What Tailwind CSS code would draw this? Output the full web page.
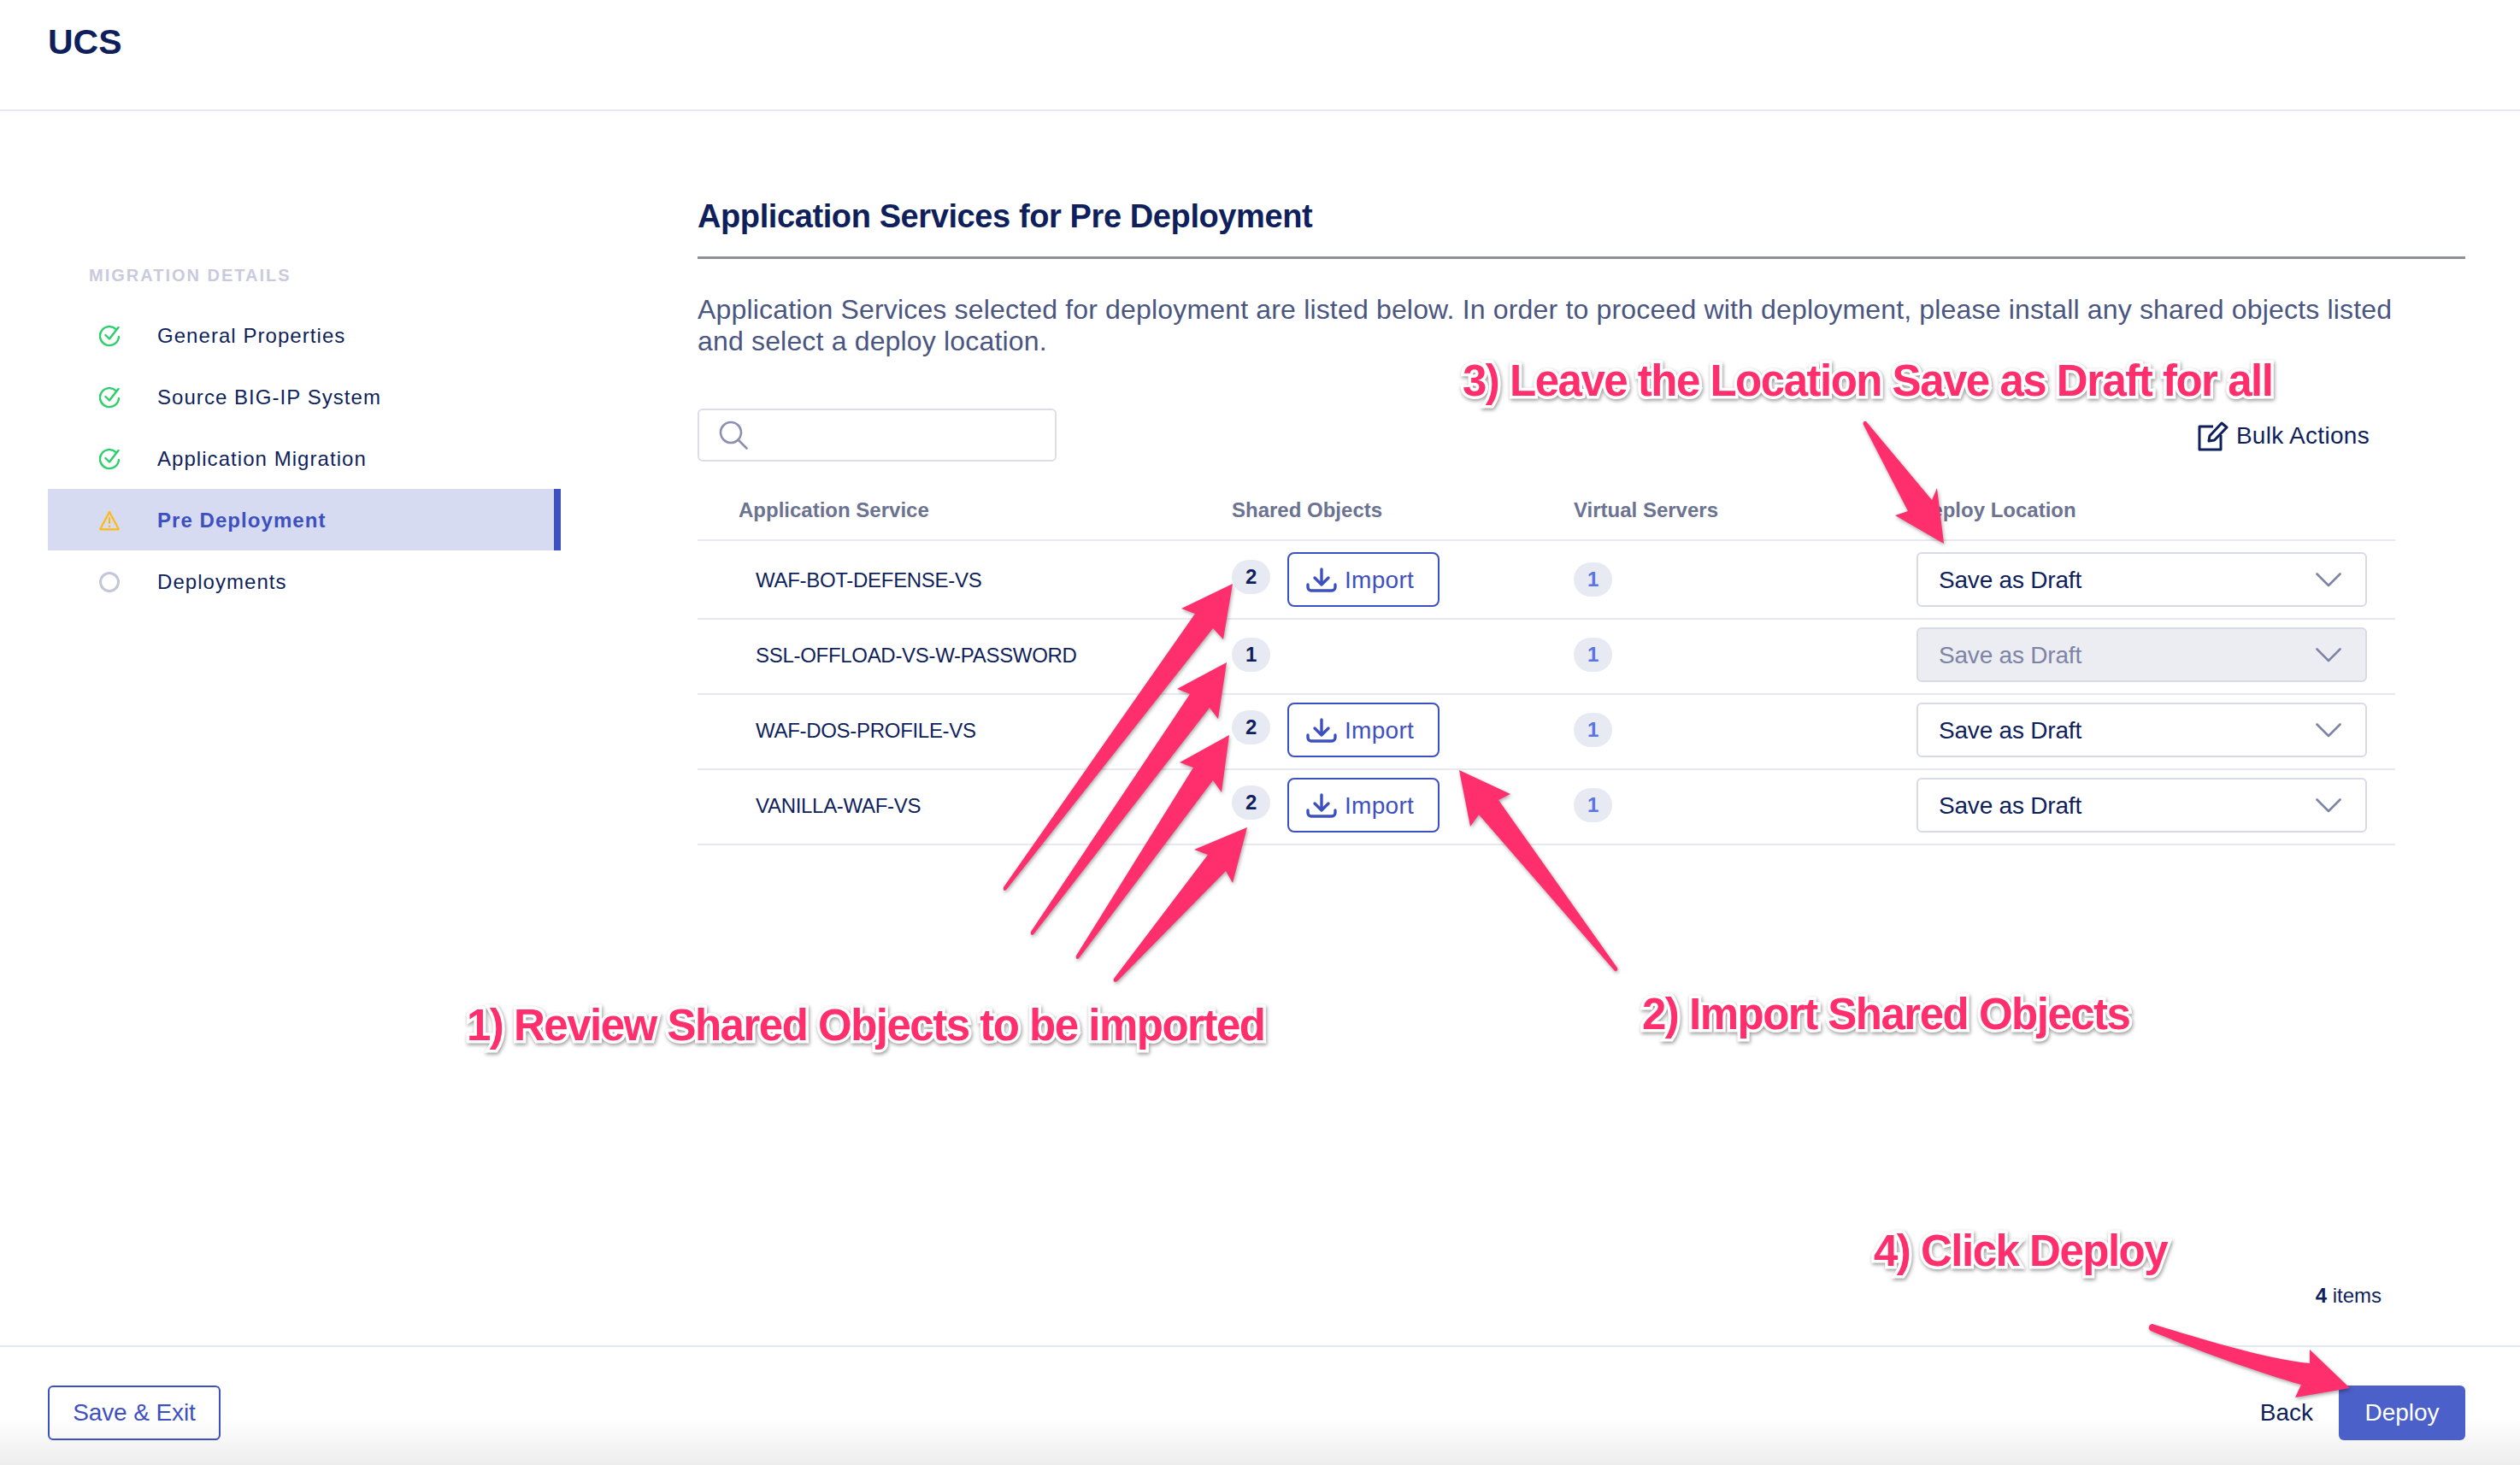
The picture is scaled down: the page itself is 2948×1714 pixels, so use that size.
<!DOCTYPE html>
<html lang="en">
<head>
    <meta charset="UTF-8">
    <meta name="viewport" content="width=device-width, initial-scale=1.0">
    <title>UCS Pre Deployment</title>
    <script src="https://cdn.jsdelivr.net/npm/@tailwindcss/browser@4"></script>
</head>
<body class="relative bg-white h-[1714px] overflow-hidden flex flex-col font-['Liberation_Sans',Arial,sans-serif] text-[#0f1f5c]">

    <!-- Header -->
    <header class="h-[130px] shrink-0 border-b-2 border-[#e8e9f0] pl-[56px] pt-[25px]">
        <h1 class="text-[41px] leading-[48px] font-bold">UCS</h1>
    </header>

    <div class="flex-1 flex min-h-0">
        <!-- Sidebar -->
        <aside class="w-[600px] ml-[56px] shrink-0 pt-[180px]">
            <div class="pl-[48px] text-[20px] leading-[24px] font-bold tracking-[2px] text-[#c8cbdd]">MIGRATION DETAILS</div>
            <ul class="mt-[22px]">
                <li class="h-[72px] flex items-center pl-[60px] pt-[2px] text-[24px] tracking-[1.05px]">
                    <svg class="w-[24px] h-[26px] mr-[44px]" viewBox="0 0 24 26" fill="none" stroke="#2bcf6c" stroke-width="2.4" stroke-linecap="round" stroke-linejoin="round"><path d="M20 5.5A11 11 0 1 0 23 14"/><path d="M7.5 12l4.5 4.5L22.5 3"/></svg>
                    <span>General Properties</span>
                </li>
                <li class="h-[72px] flex items-center pl-[60px] pt-[2px] text-[24px] tracking-[1.05px]">
                    <svg class="w-[24px] h-[26px] mr-[44px]" viewBox="0 0 24 26" fill="none" stroke="#2bcf6c" stroke-width="2.4" stroke-linecap="round" stroke-linejoin="round"><path d="M20 5.5A11 11 0 1 0 23 14"/><path d="M7.5 12l4.5 4.5L22.5 3"/></svg>
                    <span>Source BIG-IP System</span>
                </li>
                <li class="h-[72px] flex items-center pl-[60px] pt-[2px] text-[24px] tracking-[1.05px]">
                    <svg class="w-[24px] h-[26px] mr-[44px]" viewBox="0 0 24 26" fill="none" stroke="#2bcf6c" stroke-width="2.4" stroke-linecap="round" stroke-linejoin="round"><path d="M20 5.5A11 11 0 1 0 23 14"/><path d="M7.5 12l4.5 4.5L22.5 3"/></svg>
                    <span>Application Migration</span>
                </li>
                <li class="h-[72px] flex items-center pl-[60px] pt-[2px] text-[24px] tracking-[1.05px] font-bold text-[#3d50bf] bg-[#d7dbf1] border-r-[8px] border-[#3d50bf]">
                    <svg class="w-[24px] h-[24px] mr-[44px]" viewBox="0 0 24 24" fill="none" stroke="#fdb913" stroke-width="2.2" stroke-linecap="round" stroke-linejoin="round"><path d="M12 2L1.5 21.5a.6.6 0 0 0 .5.9h20a.6.6 0 0 0 .5-.9z"/><path d="M12 9v6"/><path d="M12 18.5v.4"/></svg>
                    <span>Pre Deployment</span>
                </li>
                <li class="h-[72px] flex items-center pl-[60px] pt-[2px] text-[24px] tracking-[1.05px]">
                    <span class="w-[24px] h-[24px] mr-[44px] rounded-full border-[3px] border-[#c3c7da]"></span>
                    <span>Deployments</span>
                </li>
            </ul>
        </aside>

        <!-- Main content -->
        <main class="ml-[160px] w-[2068px] flex flex-col pt-[99px]">
            <h2 class="text-[38px] leading-[48px] font-bold tracking-[-0.4px] pb-[23px] border-b-[3px] border-[#8f9096]">Application Services for Pre Deployment</h2>
            <p class="mt-[41px] text-[32px] leading-[37px] tracking-[0.17px] text-[#4a5680]">Application Services selected for deployment are listed below. In order to proceed with deployment, please install any shared objects listed<br>and select a deploy location.</p>

            <div class="w-[1986px]">
                <!-- Search and bulk actions -->
                <div class="mt-[60px] flex items-center justify-between pr-[30px]">
                    <div class="w-[420px] h-[62px] rounded-[6px] border-2 border-[#dcdde8] flex items-center pl-[23px]">
                        <svg class="w-[34px] h-[34px]" viewBox="0 0 34 34" fill="none" stroke="#8a90ad" stroke-width="2.6" stroke-linecap="round"><circle cx="14" cy="14" r="12"/><path d="M23 23l9.5 9.5"/></svg>
                    </div>
                    <div class="flex items-center text-[28px] tracking-[0.3px] gap-[9px] pt-[2px]">
                        <svg class="w-[36px] h-[36px]" viewBox="0 0 36 36" fill="none" stroke="#0f1f5c" stroke-width="3" stroke-linejoin="round"><path d="M18 7H2v27h25V17"/><path d="M13 24l1-6L28 3l6 5-14.500 15z"/></svg>
                        <span>Bulk Actions</span>
                    </div>
                </div>

                <!-- Table -->
                <div class="grid grid-cols-[625px_400px_401px_560px] h-[93px] items-end pb-[20px] border-b-2 border-[#e8e9f0] text-[24px] leading-[28px] font-bold text-[#6b7390]">
                    <div class="pl-[48px]">Application Service</div>
                    <div>Shared Objects</div>
                    <div>Virtual Servers</div>
                    <div>Deploy Location</div>
                </div>

                <div class="grid grid-cols-[625px_400px_401px_560px] items-center h-[92px] border-b-2 border-[#e8e9f0] text-[24px] tracking-[-0.3px]">
                    <div class="pl-[68px] pt-[2px]">WAF-BOT-DEFENSE-VS</div>
                    <div class="flex items-center gap-[20px]">
                        <span class="w-[45px] h-[40px] mb-[7px] rounded-full bg-[#e8eaf3] flex items-center justify-center font-bold text-[24px]">2</span>
                        <button class="w-[178px] h-[64px] rounded-[8px] border-2 border-[#3d50bf] text-[#3d50bf] text-[28px] tracking-[0.3px] flex items-center pl-[20px] pt-[2px] gap-[9px]">
                            <svg class="w-[36px] h-[30px]" viewBox="0 0 36 30" fill="none" stroke="#3d50bf" stroke-width="3.400" stroke-linecap="round" stroke-linejoin="round"><path d="M18 2v17M10 12l8 8 8-8"/><path d="M2 20v3a4 4 0 0 0 4 4h24a4 4 0 0 0 4-4v-3"/></svg>
                            Import
                        </button>
                    </div>
                    <div><span class="w-[45px] h-[40px] rounded-full bg-[#e8eaf3] flex items-center justify-center text-[24px] font-bold text-[#5b74e4]">1</span></div>
                    <div class="w-[527px] h-[64px] rounded-[6px] border-2 border-[#d8dae6] flex items-center justify-between pl-[24px] pr-[28px] text-[28px] tracking-[-0.2px]">
                        <span class="pt-[2px]">Save as Draft</span>
                        <svg class="w-[30px] h-[17px]" viewBox="0 0 30 17" fill="none" stroke="#7d84a6" stroke-width="2.6" stroke-linecap="round" stroke-linejoin="round"><path d="M1.500 1.500L15 15 28.500 1.500"/></svg>
                    </div>
                </div>

                <div class="grid grid-cols-[625px_400px_401px_560px] items-center h-[88px] pb-[4px] border-b-2 border-[#e8e9f0] text-[24px] tracking-[-0.3px]">
                    <div class="pl-[68px] pt-[2px]">SSL-OFFLOAD-VS-W-PASSWORD</div>
                    <div class="flex items-center">
                        <span class="w-[45px] h-[40px] rounded-full bg-[#e8eaf3] flex items-center justify-center font-bold text-[24px]">1</span>
                    </div>
                    <div><span class="w-[45px] h-[40px] rounded-full bg-[#e8eaf3] flex items-center justify-center text-[24px] font-bold text-[#5b74e4]">1</span></div>
                    <div class="w-[527px] h-[64px] rounded-[6px] border-2 border-[#d8dae6] bg-[#ecedf2] text-[#7d84a6] flex items-center justify-between pl-[24px] pr-[28px] text-[28px] tracking-[-0.2px]">
                        <span class="pt-[2px]">Save as Draft</span>
                        <svg class="w-[30px] h-[17px]" viewBox="0 0 30 17" fill="none" stroke="#7d84a6" stroke-width="2.6" stroke-linecap="round" stroke-linejoin="round"><path d="M1.500 1.500L15 15 28.500 1.500"/></svg>
                    </div>
                </div>

                <div class="grid grid-cols-[625px_400px_401px_560px] items-center h-[88px] pb-[4px] border-b-2 border-[#e8e9f0] text-[24px] tracking-[-0.3px]">
                    <div class="pl-[68px] pt-[2px]">WAF-DOS-PROFILE-VS</div>
                    <div class="flex items-center gap-[20px]">
                        <span class="w-[45px] h-[40px] mb-[6px] rounded-full bg-[#e8eaf3] flex items-center justify-center font-bold text-[24px]">2</span>
                        <button class="w-[178px] h-[64px] rounded-[8px] border-2 border-[#3d50bf] text-[#3d50bf] text-[28px] tracking-[0.3px] flex items-center pl-[20px] pt-[2px] gap-[9px]">
                            <svg class="w-[36px] h-[30px]" viewBox="0 0 36 30" fill="none" stroke="#3d50bf" stroke-width="3.400" stroke-linecap="round" stroke-linejoin="round"><path d="M18 2v17M10 12l8 8 8-8"/><path d="M2 20v3a4 4 0 0 0 4 4h24a4 4 0 0 0 4-4v-3"/></svg>
                            Import
                        </button>
                    </div>
                    <div><span class="w-[45px] h-[40px] rounded-full bg-[#e8eaf3] flex items-center justify-center text-[24px] font-bold text-[#5b74e4]">1</span></div>
                    <div class="w-[527px] h-[64px] rounded-[6px] border-2 border-[#d8dae6] flex items-center justify-between pl-[24px] pr-[28px] text-[28px] tracking-[-0.2px]">
                        <span class="pt-[2px]">Save as Draft</span>
                        <svg class="w-[30px] h-[17px]" viewBox="0 0 30 17" fill="none" stroke="#7d84a6" stroke-width="2.6" stroke-linecap="round" stroke-linejoin="round"><path d="M1.500 1.500L15 15 28.500 1.500"/></svg>
                    </div>
                </div>

                <div class="grid grid-cols-[625px_400px_401px_560px] items-center h-[88px] pb-[4px] border-b-2 border-[#e8e9f0] text-[24px] tracking-[-0.3px]">
                    <div class="pl-[68px] pt-[2px]">VANILLA-WAF-VS</div>
                    <div class="flex items-center gap-[20px]">
                        <span class="w-[45px] h-[40px] mb-[6px] rounded-full bg-[#e8eaf3] flex items-center justify-center font-bold text-[24px]">2</span>
                        <button class="w-[178px] h-[64px] rounded-[8px] border-2 border-[#3d50bf] text-[#3d50bf] text-[28px] tracking-[0.3px] flex items-center pl-[20px] pt-[2px] gap-[9px]">
                            <svg class="w-[36px] h-[30px]" viewBox="0 0 36 30" fill="none" stroke="#3d50bf" stroke-width="3.400" stroke-linecap="round" stroke-linejoin="round"><path d="M18 2v17M10 12l8 8 8-8"/><path d="M2 20v3a4 4 0 0 0 4 4h24a4 4 0 0 0 4-4v-3"/></svg>
                            Import
                        </button>
                    </div>
                    <div><span class="w-[45px] h-[40px] rounded-full bg-[#e8eaf3] flex items-center justify-center text-[24px] font-bold text-[#5b74e4]">1</span></div>
                    <div class="w-[527px] h-[64px] rounded-[6px] border-2 border-[#d8dae6] flex items-center justify-between pl-[24px] pr-[28px] text-[28px] tracking-[-0.2px]">
                        <span class="pt-[2px]">Save as Draft</span>
                        <svg class="w-[30px] h-[17px]" viewBox="0 0 30 17" fill="none" stroke="#7d84a6" stroke-width="2.6" stroke-linecap="round" stroke-linejoin="round"><path d="M1.500 1.500L15 15 28.500 1.500"/></svg>
                    </div>
                </div>
            </div>

            <div class="mt-auto self-end mr-[98px] mb-[46px] text-[24px] leading-[24px]"><span class="font-bold">4</span> items</div>
        </main>
    </div>

    <!-- Footer -->
    <footer class="h-[140px] shrink-0 border-t-2 border-[#e4e8f2] bg-[linear-gradient(to_bottom,#fff_60%,#ededed)] pl-[56px] pr-[64px] pt-[16px] flex items-center justify-between">
        <button class="w-[202px] h-[64px] rounded-[6px] border-2 border-[#3d50bf] text-[#3d50bf] text-[28px] tracking-[-0.1px]">Save &amp; Exit</button>
        <div class="flex items-center gap-[30px] text-[28px]">
            <button>Back</button>
            <button class="w-[148px] h-[64px] rounded-[6px] bg-[#4b60c8] text-white">Deploy</button>
        </div>
    </footer>

    <!-- Tutorial arrows drawn over the screenshot -->
    <svg class="absolute inset-0 w-[2948px] h-[1714px] pointer-events-none drop-shadow-[1px_2px_2px_rgba(0,0,0,0.35)]" viewBox="0 0 2948 1714" fill="#ff2e6c">
        <path d="M1442 683L1382 712 1398 718 1174 1038Q1173 1041 1175 1042 1177 1042 1178 1040L1419 735 1431 748z"/>
        <path d="M1435 775L1377 806 1392 812 1206 1090Q1205 1093 1207 1094 1209 1094 1210 1092L1415 828 1425 841z"/>
        <path d="M1438 860L1380 892 1396 898 1259 1118Q1258 1121 1260 1122 1262 1122 1263 1120L1419 913 1429 927z"/>
        <path d="M1459 968L1397 994 1413 1000 1303 1145Q1302 1148 1304 1149 1306 1149 1308 1147L1434 1019 1442 1033z"/>
        <path d="M1707 901L1720 967 1730 953 1889 1136Q1891 1137 1892 1135 1893 1133 1891 1131L1753 936 1767 929z"/>
        <path d="M2274 636L2266 571 2260 585 2183 493Q2181 492 2180 494 2179 496 2180 497L2232 598 2217 603z"/>
        <path d="M2749 1624L2702 1579 2702 1595C2650 1590 2570 1565 2518 1549 2514 1549 2512 1555 2516 1557 2570 1580 2640 1605 2692 1620L2685 1635z"/>
    </svg>

    <!-- Tutorial captions -->
    <div class="absolute left-[546px] top-[1170px] whitespace-nowrap text-[51px] leading-[60px] tracking-[-1.5px] font-bold text-[#ff2e6c] [-webkit-text-stroke:7px_white] [paint-order:stroke_fill] drop-shadow-[1px_2px_2px_rgba(0,0,0,0.4)]">1) Review Shared Objects to be imported</div>
    <div class="absolute left-[1921px] top-[1157px] whitespace-nowrap text-[51px] leading-[60px] tracking-[-1.5px] font-bold text-[#ff2e6c] [-webkit-text-stroke:7px_white] [paint-order:stroke_fill] drop-shadow-[1px_2px_2px_rgba(0,0,0,0.4)]">2) Import Shared Objects</div>
    <div class="absolute left-[1711px] top-[416px] whitespace-nowrap text-[51px] leading-[60px] tracking-[-1.5px] font-bold text-[#ff2e6c] [-webkit-text-stroke:7px_white] [paint-order:stroke_fill] drop-shadow-[1px_2px_2px_rgba(0,0,0,0.4)]">3) Leave the Location Save as Draft for all</div>
    <div class="absolute left-[2192px] top-[1434px] whitespace-nowrap text-[51px] leading-[60px] tracking-[-1.5px] font-bold text-[#ff2e6c] [-webkit-text-stroke:7px_white] [paint-order:stroke_fill] drop-shadow-[1px_2px_2px_rgba(0,0,0,0.4)]">4) Click Deploy</div>

</body>
</html>
